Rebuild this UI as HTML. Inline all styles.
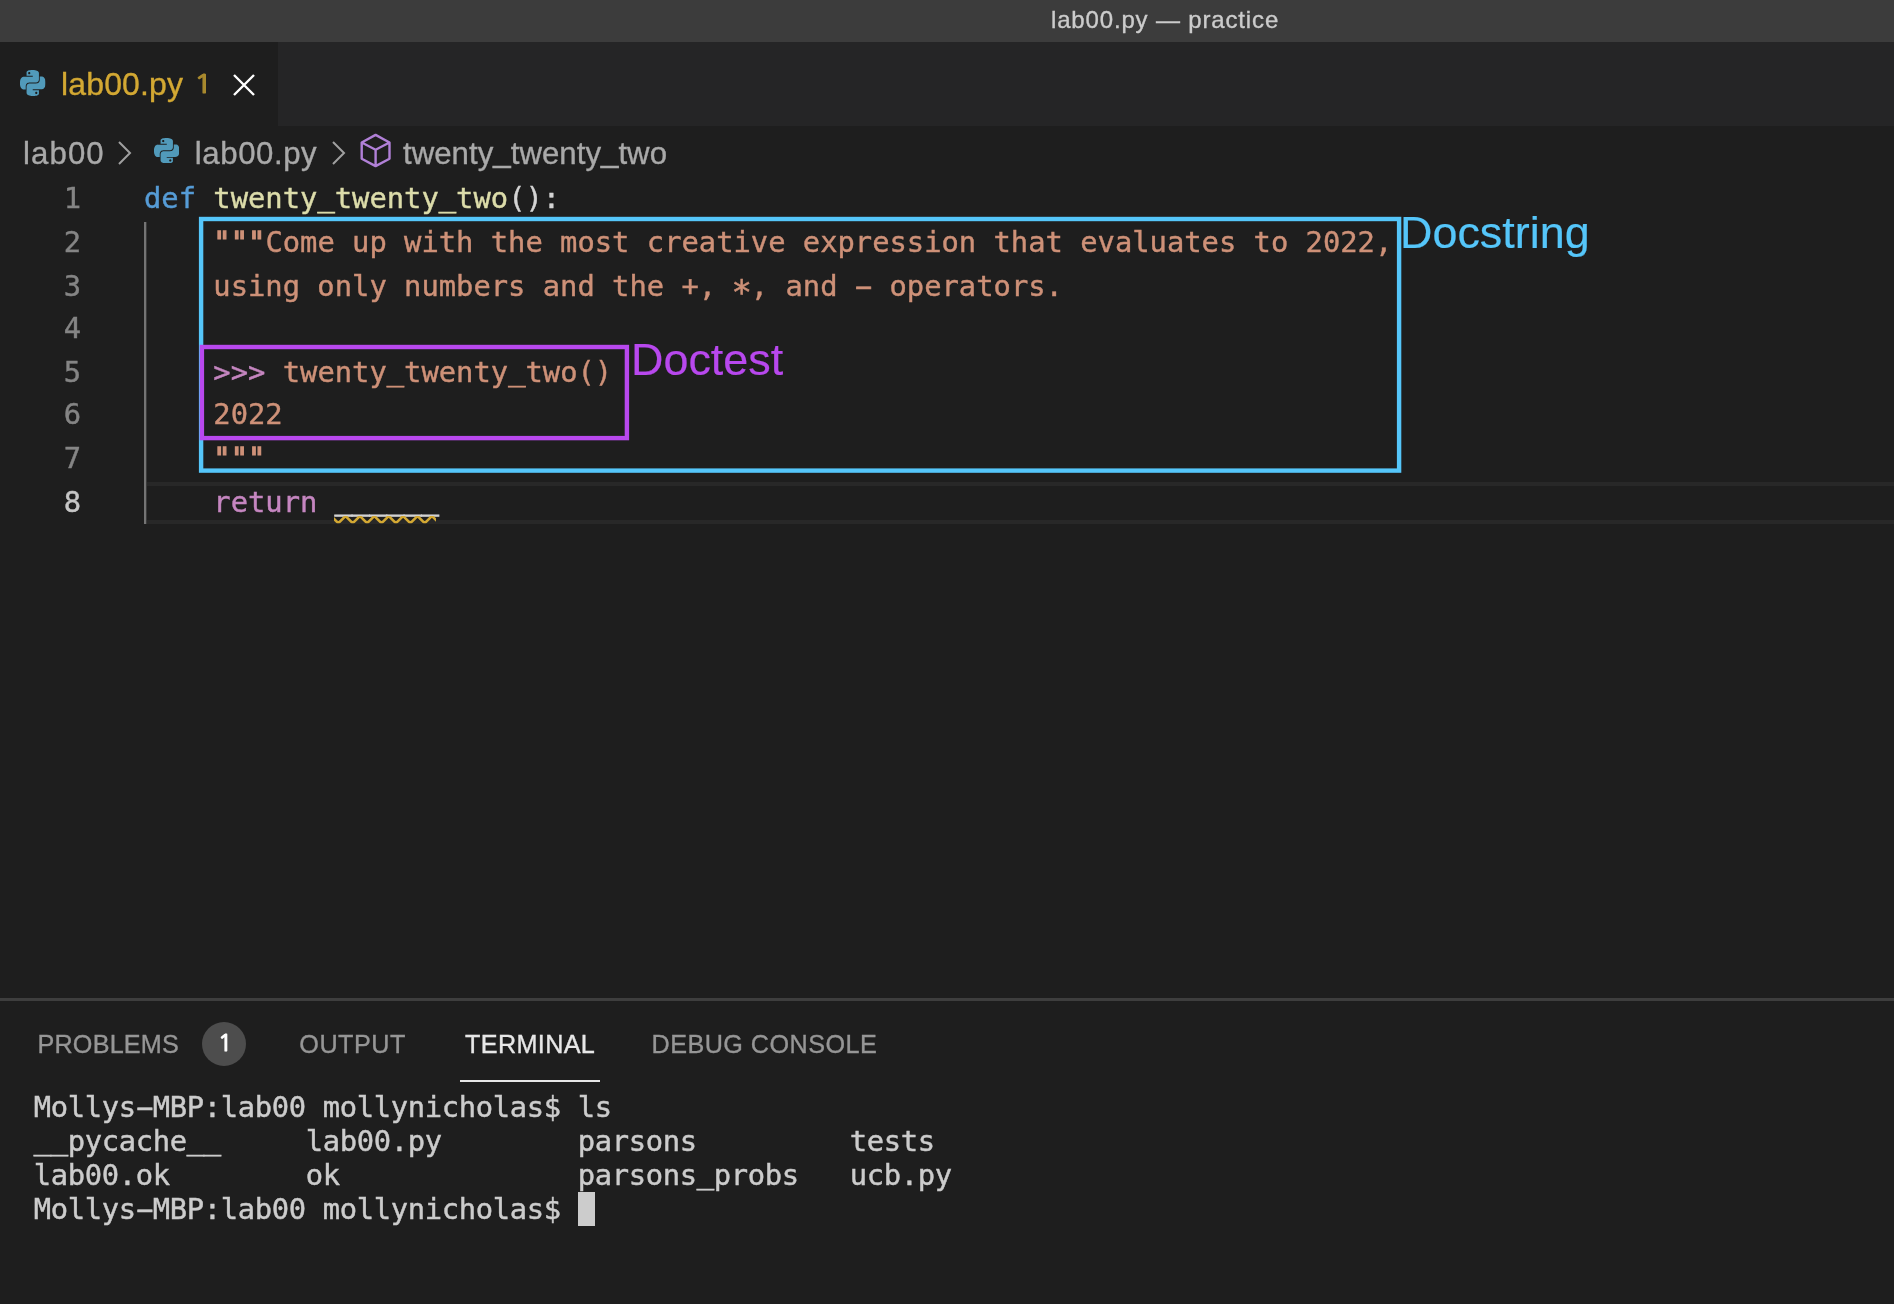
<!DOCTYPE html>
<html lang="en">
<head>
<meta charset="utf-8">
<title>lab00.py — practice</title>
<style>
*{box-sizing:border-box;margin:0;padding:0}
html,body{width:1894px;height:1304px;overflow:hidden;background:#1e1e1e}
body{position:relative;-webkit-text-stroke:0.35px;font-family:"Liberation Sans",sans-serif;color:#ccc;-webkit-font-smoothing:antialiased}
.abs{position:absolute;white-space:pre}
#titlebar{position:absolute;left:0;top:0;width:1894px;height:42px;background:#3c3c3c}
#title{left:1051px;top:5.5px;font-size:24px;line-height:28px;color:#cccccc;letter-spacing:0.84px}
#tabbar{position:absolute;left:0;top:42px;width:1894px;height:84px;background:#252526}
#tab{position:absolute;left:0;top:0;width:278px;height:84px;background:#1e1e1e}
.ui{font-size:31.2px;line-height:36px}
#tabname{left:61px;top:65.5px;color:#d3a833;font-size:32px;letter-spacing:0.15px}
#tabnum{left:193.8px;top:65.7px;color:#a98a2e;font-size:25.5px;-webkit-text-stroke:1.2px;transform:scaleX(1.2);transform-origin:0 0;font-family:"NanumGothic","Liberation Sans",sans-serif}
.crumb{color:#a9a9a9;top:135.5px}
.mono{font-family:"DejaVu Sans Mono","Liberation Mono",monospace;font-size:28.8px;-webkit-text-stroke:0.42px}
.ln{position:absolute;left:0;width:81px;text-align:right;color:#858585;height:44px;line-height:44px}
.cl{position:absolute;left:144px;height:44px;line-height:44px;white-space:pre;color:#d4d4d4}
.h{display:inline-block;transform:scaleX(1.95);position:relative;top:-0.5px}.a{display:inline-block;transform:scale(1.18);position:relative;top:5.5px}.q{-webkit-text-stroke:1.3px}.u{position:relative;top:-2px;-webkit-text-stroke:0.7px}.k{color:#569cd6}.f{color:#dcdcaa}.s{color:#ce9178}.c{color:#c586c0}
#panelborder{position:absolute;left:0;top:998px;width:1894px;height:3px;background:#3e3e3e}
.pt{font-size:25.2px;line-height:30px;top:1029.3px;color:#969696}
.term{font-family:"DejaVu Sans Mono","Liberation Mono",monospace;font-size:28.8px;-webkit-text-stroke:0.45px;line-height:34px;color:#cccccc;left:33.8px;letter-spacing:-0.339px}
</style>
</head>
<body>
<div id="root" style="position:absolute;left:0;top:0;width:1894px;height:1304px;will-change:transform">
<svg width="0" height="0" style="position:absolute"><defs><symbol id="py" viewBox="0 0 24 24" preserveAspectRatio="none"><path fill="#519aba" d="M14.25.18l.9.2.73.26.59.3.45.32.34.34.25.34.16.33.1.3.04.26.02.2-.01.13V8.5l-.05.63-.13.55-.21.46-.26.38-.3.31-.33.25-.35.19-.35.14-.33.1-.3.07-.26.04-.21.02H8.77l-.69.05-.59.14-.5.22-.41.27-.33.32-.27.35-.2.36-.15.37-.1.35-.07.32-.04.27-.02.21v3.06H3.17l-.21-.03-.28-.07-.32-.12-.35-.18-.36-.26-.36-.36-.35-.46-.32-.59-.28-.73-.21-.88-.14-1.05-.05-1.23.06-1.22.16-1.04.24-.87.32-.71.36-.57.4-.44.42-.33.42-.24.4-.16.36-.1.32-.05.24-.01h.16l.06.01h8.16v-.83H6.18l-.01-2.75-.02-.37.05-.34.11-.31.17-.28.25-.26.31-.23.38-.2.44-.18.51-.15.58-.12.64-.1.71-.06.77-.04.84-.02 1.27.05zm-6.3 1.98l-.23.33-.08.41.08.41.23.34.33.22.41.09.41-.09.33-.22.23-.34.08-.41-.08-.41-.23-.33-.33-.22-.41-.09-.41.09zm13.09 3.95l.28.06.32.12.35.18.36.27.36.35.35.47.32.59.28.73.21.88.14 1.04.05 1.23-.06 1.23-.16 1.04-.24.86-.32.71-.36.57-.4.45-.42.33-.42.24-.4.16-.36.09-.32.05-.24.02-.16-.01h-8.22v.82h5.84l.01 2.76.02.36-.05.34-.11.31-.17.29-.25.25-.31.24-.38.2-.44.17-.51.15-.58.13-.64.09-.71.07-.77.04-.84.01-1.27-.04-1.07-.14-.9-.2-.73-.25-.59-.3-.45-.33-.34-.34-.25-.34-.16-.33-.1-.3-.04-.25-.02-.2.01-.13v-5.34l.05-.64.13-.54.21-.46.26-.38.3-.32.33-.24.35-.2.35-.14.33-.1.3-.06.26-.04.21-.02.13-.01h5.84l.69-.05.59-.14.5-.21.41-.28.33-.32.27-.35.2-.36.15-.36.1-.35.07-.32.04-.28.02-.21V6.07h2.09l.14.01zm-6.47 14.25l-.23.33-.08.41.08.41.23.33.33.23.41.08.41-.08.33-.23.23-.33.08-.41-.08-.41-.23-.33-.33-.23-.41-.08-.41.08z"/></symbol></defs></svg>
<div id="titlebar"></div>
<div id="title" class="abs">lab00.py — practice</div>

<div id="tabbar"><div id="tab"></div></div>
<svg class="abs" style="left:20px;top:69.5px" width="25.5" height="26"><use href="#py" width="25.5" height="26"/></svg>
<div id="tabname" class="abs ui">lab00.py</div>
<div id="tabnum" class="abs ui">1</div>
<svg class="abs" style="left:232px;top:73px" width="24" height="24" viewBox="0 0 24 24"><path d="M2 2 L22 22 M22 2 L2 22" stroke="#ffffff" stroke-width="2.4" fill="none"/></svg>

<!-- breadcrumbs -->
<div class="abs ui crumb" style="left:23px;letter-spacing:1.1px">lab00</div>
<svg class="abs" style="left:116px;top:140px" width="18" height="26" viewBox="0 0 18 26"><path d="M3 2 L14 13 L3 24" stroke="#a0a0a0" stroke-width="2" fill="none"/></svg>
<svg class="abs" style="left:153.5px;top:137.5px" width="25.5" height="25.5"><use href="#py" width="25.5" height="25.5"/></svg>
<div class="abs ui crumb" style="left:194.8px;letter-spacing:0.57px">lab00.py</div>
<svg class="abs" style="left:330px;top:140px" width="18" height="26" viewBox="0 0 18 26"><path d="M3 2 L14 13 L3 24" stroke="#a0a0a0" stroke-width="2" fill="none"/></svg>
<svg class="abs" style="left:359px;top:132px" width="34" height="38" viewBox="0 0 34 38"><path d="M16.6 2.9 L30.5 10.5 L30.5 26.7 L16.6 34.1 L2.7 26.7 L2.7 10.5 Z M2.7 10.5 L16.6 17.7 L30.5 10.5 M16.6 17.7 L16.6 34.1" stroke="#b180d7" stroke-width="2.4" fill="none" stroke-linejoin="round"/></svg>
<div class="abs ui crumb" style="left:403px;letter-spacing:0.03px">twenty<span class="u">_</span>twenty<span class="u">_</span>two</div>

<!-- editor -->
<div id="editor" class="mono">
<div class="abs" style="left:146px;top:482px;width:1748px;height:42px;border-top:4px solid #282828;border-bottom:4px solid #282828"></div>
<div class="abs" style="left:144px;top:222px;width:2px;height:302px;background:#747474"></div>
<div class="abs" style="left:146px;top:222px;width:1px;height:302px;background:#3a3a3a"></div>

<div class="ln" style="top:176px">1</div>
<div class="ln" style="top:220px">2</div>
<div class="ln" style="top:264px">3</div>
<div class="ln" style="top:306px">4</div>
<div class="ln" style="top:350px">5</div>
<div class="ln" style="top:392px">6</div>
<div class="ln" style="top:436px">7</div>
<div class="ln" style="top:480px;color:#c6c6c6">8</div>

<div class="cl" style="top:176px"><span class="k">def</span> <span class="f">twenty<span class="u">_</span>twenty<span class="u">_</span>two</span>():</div>
<div class="cl s" style="top:220px">    <span class="q">"""</span>Come up with the most creative expression that evaluates to 2022,</div>
<div class="cl s" style="top:264px">    using only numbers and the +, <span class="a">*</span>, and <span class="h">-</span> operators.</div>
<div class="cl s" style="top:350px">    <span class="c">&gt;&gt;&gt;</span> twenty<span class="u">_</span>twenty<span class="u">_</span>two()</div>
<div class="cl s" style="top:392px">    2022</div>
<div class="cl s" style="top:436px">    <span class="q">"""</span></div>
<div class="cl" style="top:480px">    <span class="c">return</span> <span class="u" style="top:-3px;-webkit-text-stroke:1px">______</span></div>
</div>

<svg class="abs" style="left:334px;top:516.3px" width="102" height="8" viewBox="0 0 102 8"><defs><clipPath id="sqc"><rect x="0" y="0" width="102" height="7.2"/></clipPath></defs><path d="M-2.88 0.0 L4.32 7.2 L11.52 0.0 L18.72 7.2 L25.92 0.0 L33.12 7.2 L40.32 0.0 L47.52 7.2 L54.72 0.0 L61.92 7.2 L69.12 0.0 L76.32 7.2 L83.52 0.0 L90.72 7.2 L97.92 0.0 L105.12 7.2" fill="none" stroke="#d3a833" stroke-width="2.5" stroke-linejoin="miter" clip-path="url(#sqc)"/></svg>
<!-- annotations -->
<svg class="abs" style="left:190px;top:210px" width="1220" height="270" viewBox="190 210 1220 270"><rect x="201.1" y="219" width="1198" height="251.6" fill="none" stroke="#55c6fa" stroke-width="4.4"/><rect x="201.9" y="347" width="425" height="91.1" fill="none" stroke="#b848ee" stroke-width="4.4"/></svg>
<div class="abs" style="left:1400px;top:209px;font-size:44.9px;line-height:48px;color:#55c6fa;-webkit-text-stroke:0.2px">Docstring</div>

<div class="abs" style="left:631px;top:336px;font-size:44.9px;line-height:48px;color:#b848ee;-webkit-text-stroke:0.2px">Doctest</div>

<!-- panel -->
<div id="panelborder"></div>
<div class="abs pt" style="left:37.5px;letter-spacing:0.19px">PROBLEMS</div>
<div class="abs" style="left:202px;top:1022px;width:44px;height:44px;border-radius:22px;background:#4d4d4d"></div>
<div class="abs" style="left:203px;top:1022px;width:44px;height:44px;color:#fff;font-size:23.5px;line-height:42.5px;font-family:'NanumGothic','Liberation Sans',sans-serif;-webkit-text-stroke:1.2px;text-align:center">1</div>
<div class="abs pt" style="left:299.3px;letter-spacing:0.51px">OUTPUT</div>
<div class="abs pt" style="left:465px;color:#e7e7e7;letter-spacing:0.36px">TERMINAL</div>
<div class="abs" style="left:460px;top:1080px;width:140px;height:2px;background:#e7e7e7"></div>
<div class="abs pt" style="left:651.5px;letter-spacing:0.46px">DEBUG CONSOLE</div>

<div class="abs term" style="top:1090px">Mollys<span class="h">-</span>MBP:lab00 mollynicholas$ ls</div>
<div class="abs term" style="top:1124px"><span class="u">__</span>pycache<span class="u">__</span>     lab00.py        parsons         tests</div>
<div class="abs term" style="top:1158px">lab00.ok        ok              parsons<span class="u">_</span>probs   ucb.py</div>
<div class="abs term" style="top:1192px">Mollys<span class="h">-</span>MBP:lab00 mollynicholas$ </div>
<div class="abs" style="left:578px;top:1192px;width:17px;height:34px;background:#cccccc"></div>
</div>
</body>
</html>
